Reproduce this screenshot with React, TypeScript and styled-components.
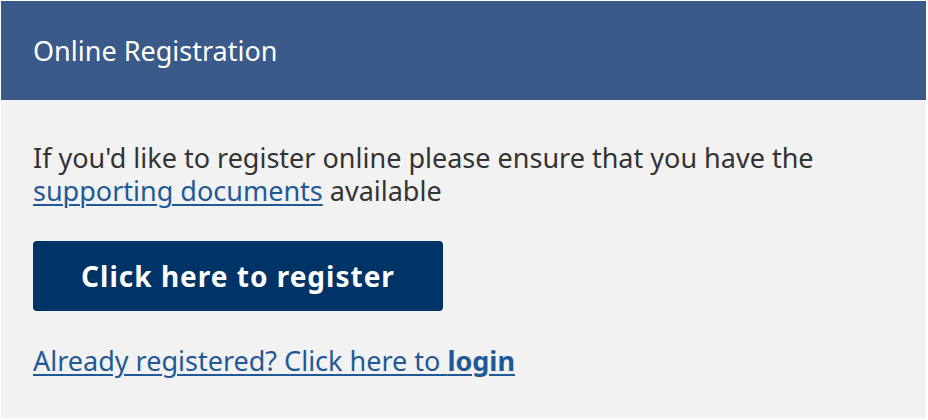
import React from 'react';
import styled, { createGlobalStyle } from 'styled-components';

const GlobalStyle = createGlobalStyle`
  html, body {
    margin: 0;
    padding: 0;
    background: #ffffff;
  }
  body {
    font-family: 'Noto Sans', 'Open Sans', sans-serif;
  }
`;

const Frame = styled.div`
  padding: 1px;
  width: 928px;
  height: 420px;
  box-sizing: border-box;
`;

const Panel = styled.section`
  width: 925px;
  height: 417px;
  background: #f2f2f2;
  display: flex;
  flex-direction: column;
`;

const Header = styled.header`
  height: 99px;
  background: #3a5a8a;
  display: flex;
  align-items: center;
  padding: 0 32px;
`;

const Title = styled.h2`
  margin: 0;
  font-size: 27px;
  font-weight: 400;
  color: #ffffff;
`;

const Body = styled.div`
  padding: 41px 32px 0;
  display: flex;
  flex-direction: column;
  align-items: flex-start;
`;

const Intro = styled.p`
  margin: 0;
  font-size: 27px;
  line-height: 33px;
  color: #333333;
`;

const Link = styled.a`
  color: #1f5a96;
  text-decoration: underline;
  text-underline-offset: 3px;
  text-decoration-thickness: 2px;
`;

const RegisterButton = styled.button`
  margin-top: 34px;
  width: 410px;
  height: 70px;
  border: none;
  border-radius: 4px;
  background: #003366;
  color: #ffffff;
  font-family: inherit;
  font-size: 28px;
  font-weight: 700;
  letter-spacing: 1px;
  cursor: pointer;
`;

const LoginLine = styled.p`
  margin: 33px 0 0;
  font-size: 27px;
  line-height: 33px;
`;

export default function App() {
  return (
    <>
      <GlobalStyle />
      <Frame>
        <Panel>
          <Header>
            <Title>Online Registration</Title>
          </Header>
          <Body>
            <Intro>
              If you'd like to register online please ensure that you have the
              <br />
              <Link href="#">supporting documents</Link> available
            </Intro>
            <RegisterButton>Click here to register</RegisterButton>
            <LoginLine>
              <Link href="#">
                Already registered? Click here to <strong>login</strong>
              </Link>
            </LoginLine>
          </Body>
        </Panel>
      </Frame>
    </>
  );
}
